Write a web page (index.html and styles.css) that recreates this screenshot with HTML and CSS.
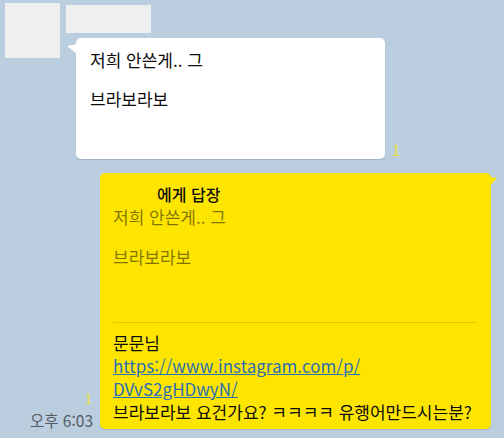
FILE: index.html
```html
<!DOCTYPE html>
<html lang="ko">
<head>
  <meta charset="UTF-8">
  <meta name="viewport" content="width=device-width, initial-scale=1.0">
  <title>채팅</title>
  <link rel="stylesheet" href="styles.css">
</head>
<body>
  <div class="chat">
    <!-- 받은 메시지 -->
    <div class="msg-in">
      <div class="avatar"></div>
      <div class="in-body">
        <div class="sender"></div>
        <div class="bubble-row">
          <div class="bubble bubble-white">
            <p class="text-in">저희 안쓴게.. 그<br><br>브라보라보<br><br><br></p>
          </div>
          <span class="unread">1</span>
        </div>
      </div>
    </div>

    <!-- 보낸 메시지 (답장) -->
    <div class="msg-out">
      <div class="meta">
        <span class="unread">1</span>
        <span class="time">오후 6:03</span>
      </div>
      <div class="bubble bubble-yellow">
        <div class="reply-head"><span class="reply-name"></span>에게 답장</div>
        <p class="quote">저희 안쓴게.. 그<br><br>브라보라보<br><br><br></p>
        <div class="divider"></div>
        <p class="text-out">
          문문님<br>
          <a href="#" class="link">https://www.instagram.com/p/<br>DVvS2gHDwyN/</a><br>
          브라보라보 요건가요? ㅋㅋㅋㅋ 유행어만드시는분?
        </p>
      </div>
    </div>
  </div>
</body>
</html>
```

FILE: styles.css
```css
* {
  margin: 0;
  padding: 0;
  box-sizing: border-box;
}

body {
  font-family: "Noto Sans CJK KR", "Noto Sans", sans-serif;
  background: #bacee0;
  color: #0c0c0c;
  width: 504px;
  height: 438px;
  overflow: hidden;
}

.chat {
  display: flex;
  flex-direction: column;
}

/* 받은 메시지 */
.msg-in {
  display: flex;
  gap: 6px;
  padding: 3px 0 0 5px;
}

.avatar {
  width: 55px;
  height: 55px;
  background: #efefef;
}

.in-body {
  display: flex;
  flex-direction: column;
}

.sender {
  width: 85px;
  height: 28px;
  margin-top: 2px;
  background: #efefef;
}

.bubble-row {
  display: flex;
  align-items: flex-end;
  gap: 7px;
  margin: 5px 0 0 10px;
}

.bubble {
  position: relative;
  border-radius: 5px;
  box-shadow: 0 1px 1px rgba(0, 0, 0, 0.15);
}

.bubble-white {
  width: 309px;
  height: 121px;
  background: #ffffff;
  padding: 12px 14px;
}

.bubble-white::before {
  content: "";
  position: absolute;
  left: -9px;
  top: 6px;
  width: 10px;
  height: 10px;
  background: #ffffff;
  clip-path: polygon(100% 0, 0 20%, 100% 100%);
}

.text-in {
  font-size: 17px;
  line-height: 19.5px;
}

.unread {
  font-size: 15px;
  line-height: 16px;
  color: #f0e23a;
  margin-bottom: 1px;
}

/* 보낸 메시지 */
.msg-out {
  display: flex;
  justify-content: flex-end;
  align-items: flex-end;
  gap: 7px;
  margin-top: 14px;
  padding-right: 13px;
}

.meta {
  display: flex;
  flex-direction: column;
  align-items: flex-end;
  margin-bottom: 1px;
}

.meta .unread {
  font-size: 13px;
  line-height: 16px;
  margin: 0 1px 5px 0;
}

.time {
  font-size: 15.5px;
  line-height: 16px;
  color: #555a60;
}

.bubble-yellow {
  width: 391px;
  background: #fee500;
  padding: 11px 10px 6px 13px;
}

.bubble-yellow::after {
  content: "";
  position: absolute;
  right: -6px;
  top: 4px;
  width: 7px;
  height: 9px;
  background: #fee500;
  clip-path: polygon(0 0, 100% 10%, 0 100%);
}

.reply-head {
  font-size: 16px;
  font-weight: 500;
  line-height: 20px;
}

.reply-name {
  display: inline-block;
  width: 44px;
}

.quote {
  margin-top: 3px;
  font-size: 17px;
  line-height: 20px;
  color: rgba(0, 0, 0, 0.5);
}

.divider {
  height: 1px;
  background: rgba(0, 0, 0, 0.12);
  margin: 15px 4px 0 0;
}

.text-out {
  margin-top: 8px;
  font-size: 17px;
  line-height: 23px;
  white-space: nowrap;
}

.link {
  color: #2a6fb4;
  text-decoration: underline;
}
```
